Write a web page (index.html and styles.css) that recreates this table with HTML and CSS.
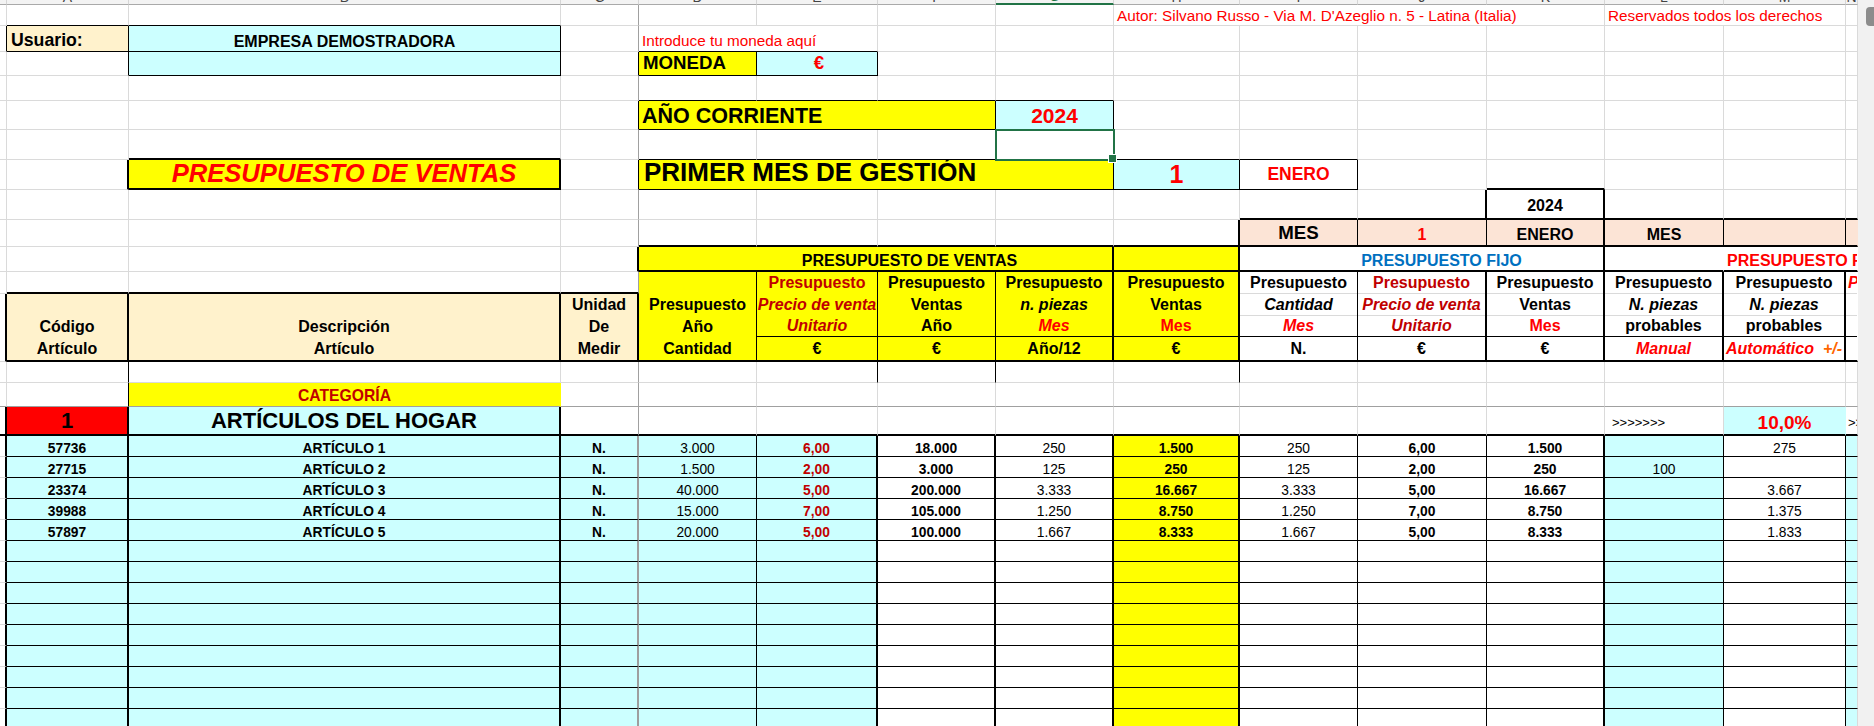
FILE: index.html
```html
<!DOCTYPE html>
<html lang="es">
<head>
<meta charset="utf-8">
<title>Presupuesto de ventas</title>
<link rel="stylesheet" href="styles.css">
</head>
<body>
<div class="app">
  <div class="sheet">
    <div class="row hh">
      <div class="hc"></div><div class="hc"><span>A</span></div><div class="hc"><span>B</span></div><div class="hc"><span>C</span></div><div class="hc"><span>D</span></div><div class="hc"><span>E</span></div><div class="hc"><span>F</span></div><div class="hc on"><span>G</span></div><div class="hc"><span>H</span></div><div class="hc"><span>I</span></div><div class="hc"><span>J</span></div><div class="hc"><span>K</span></div><div class="hc"><span>L</span></div><div class="hc"><span>M</span></div><div class="hc"><span>N</span></div>
    </div>

    <div class="row h21">
      <div class="c"></div><div class="c bb"></div><div class="c bb"></div><div class="c fz"></div>
      <div class="c"></div><div class="c"></div><div class="c"></div><div class="c"></div>
      <div class="c s4 L note">Autor: Silvano Russo - Via M. D'Azeglio n. 5 - Latina (Italia)</div>
      <div class="c s2 L note">Reservados todos los derechos</div>
      <div class="c"></div>
    </div>

    <div class="row h26">
      <div class="c br"></div>
      <div class="c cr br bb L lbl">Usuario:</div>
      <div class="c cy br bb co">EMPRESA DEMOSTRADORA</div>
      <div class="c fz"></div>
      <div class="c s2 bb L note nt">Introduce tu moneda aquí</div>
      <div class="c"></div><div class="c"></div><div class="c"></div><div class="c"></div><div class="c"></div><div class="c"></div><div class="c"></div><div class="c"></div><div class="c"></div>
    </div>

    <div class="row h24">
      <div class="c"></div>
      <div class="c br"></div>
      <div class="c cy br bb"></div>
      <div class="c fz br"></div>
      <div class="c ye br bb L mon">MONEDA</div>
      <div class="c cy br bb red mon">€</div>
      <div class="c"></div><div class="c"></div><div class="c"></div><div class="c"></div><div class="c"></div><div class="c"></div><div class="c"></div><div class="c"></div><div class="c"></div>
    </div>

    <div class="row h25">
      <div class="c"></div><div class="c"></div><div class="c"></div><div class="c fz"></div>
      <div class="c bb"></div><div class="c bb"></div><div class="c bb"></div><div class="c bb"></div>
      <div class="c"></div><div class="c"></div><div class="c"></div><div class="c"></div><div class="c"></div><div class="c"></div><div class="c"></div>
    </div>

    <div class="row h29">
      <div class="c"></div><div class="c"></div><div class="c"></div><div class="c fz br"></div>
      <div class="c s3 ye br bb L ano">AÑO CORRIENTE</div>
      <div class="c cy br bb red yr">2024</div>
      <div class="c"></div><div class="c"></div><div class="c"></div><div class="c"></div><div class="c"></div><div class="c"></div><div class="c"></div>
    </div>

    <div class="row h30">
      <div class="c"></div><div class="c"></div><div class="c BB"></div><div class="c fz"></div>
      <div class="c bb"></div><div class="c bb"></div><div class="c bb"></div><div class="c bb sel"></div>
      <div class="c bb"></div><div class="c bb"></div><div class="c"></div><div class="c"></div><div class="c"></div><div class="c"></div><div class="c"></div>
    </div>

    <div class="row h30">
      <div class="c"></div>
      <div class="c BR"></div>
      <div class="c ye BR BB red title">PRESUPUESTO DE VENTAS</div>
      <div class="c fz br"></div>
      <div class="c s4 ye br bb L big">PRIMER MES DE GESTIÓN</div>
      <div class="c cy br bb red one">1</div>
      <div class="c br bb M red ene">ENERO</div>
      <div class="c"></div>
      <div class="c BB"></div>
      <div class="c"></div><div class="c"></div><div class="c"></div>
    </div>

    <div class="row h30">
      <div class="c"></div><div class="c"></div><div class="c"></div><div class="c fz"></div>
      <div class="c"></div><div class="c"></div><div class="c"></div><div class="c"></div><div class="c"></div>
      <div class="c BB"></div>
      <div class="c BR BB"></div>
      <div class="c BR BB m16 pb3">2024</div>
      <div class="c BB"></div><div class="c BB"></div><div class="c BB"></div>
    </div>

    <div class="row h27">
      <div class="c"></div><div class="c"></div><div class="c"></div><div class="c fz"></div>
      <div class="c BB"></div><div class="c BB"></div><div class="c BB"></div><div class="c BB"></div>
      <div class="c BR BB"></div>
      <div class="c pe br BB mes">MES</div>
      <div class="c pe br BB red m16 pb1">1</div>
      <div class="c pe BR BB m16 pb1">ENERO</div>
      <div class="c pe br BB m16 pb1">MES</div>
      <div class="c pe br BB"></div>
      <div class="c pe BB"></div>
    </div>

    <div class="row h25">
      <div class="c"></div><div class="c"></div><div class="c"></div>
      <div class="c BR"></div>
      <div class="c s4 ye BR BB m16 sh1">PRESUPUESTO DE VENTAS</div>
      <div class="c ye BR BB"></div>
      <div class="c s3 wh BR BB m16 blue sh2">PRESUPUESTO FIJO</div>
      <div class="c wh BB"></div>
      <div class="c s2 wh BB L m16 red">PRESUPUESTO FLEXIBLE</div>
    </div>

    <div class="row h90 hd">
      <div class="c stk nb">
        <div class="c h22"></div>
        <div class="c grow BR"></div>
      </div>
      <div class="c stk nb">
        <div class="c h22 BB"></div>
        <div class="c grow cr BR BB stk">
          <div class="ln h22"></div><div class="ln h21">Código</div><div class="ln grow">Artículo</div>
        </div>
      </div>
      <div class="c stk nb">
        <div class="c h22 BB"></div>
        <div class="c grow cr BR BB stk">
          <div class="ln h22"></div><div class="ln h21">Descripción</div><div class="ln grow">Artículo</div>
        </div>
      </div>
      <div class="c stk nb">
        <div class="c h22 fz BB"></div>
        <div class="c grow cr BR BB stk">
          <div class="ln h22">Unidad</div><div class="ln h21">De</div><div class="ln grow">Medir</div>
        </div>
      </div>
      <div class="c ye br BB stk">
        <div class="ln h22"></div><div class="ln h22">Presupuesto</div><div class="ln h21">Año</div><div class="ln grow">Cantidad</div>
      </div>
      <div class="c ye br BB stk">
        <div class="ln h22 dred">Presupuesto</div><div class="ln h22 dred it">Precio de venta</div><div class="ln h21 dred it lb">Unitario</div><div class="ln grow">€</div>
      </div>
      <div class="c ye br BB stk">
        <div class="ln h22">Presupuesto</div><div class="ln h22">Ventas</div><div class="ln h21 lb">Año</div><div class="ln grow">€</div>
      </div>
      <div class="c ye BR BB stk">
        <div class="ln h22">Presupuesto</div><div class="ln h22 it">n. piezas</div><div class="ln h21 red it lb">Mes</div><div class="ln grow">Año/12</div>
      </div>
      <div class="c ye BR BB stk">
        <div class="ln h22">Presupuesto</div><div class="ln h22">Ventas</div><div class="ln h21 red lb">Mes</div><div class="ln grow">€</div>
      </div>
      <div class="c wh br BB stk">
        <div class="ln h22 lg">Presupuesto</div><div class="ln h22 lg it">Cantidad</div><div class="ln h21 red it lb">Mes</div><div class="ln grow">N.</div>
      </div>
      <div class="c wh BR BB stk">
        <div class="ln h22 lg dred">Presupuesto</div><div class="ln h22 lg dred it">Precio de venta</div><div class="ln h21 dred it lb">Unitario</div><div class="ln grow">€</div>
      </div>
      <div class="c wh BR BB stk">
        <div class="ln h22 lg">Presupuesto</div><div class="ln h22 lg">Ventas</div><div class="ln h21 red lb">Mes</div><div class="ln grow">€</div>
      </div>
      <div class="c wh BR BB stk">
        <div class="ln h22 lg">Presupuesto</div><div class="ln h22 lg it">N. piezas</div><div class="ln h21 lb">probables</div><div class="ln grow red it">Manual</div>
      </div>
      <div class="c wh BR BB stk">
        <div class="ln h22 lg">Presupuesto</div><div class="ln h22 lg it">N. piezas</div><div class="ln h21 lb">probables</div><div class="ln grow red it">Automático&nbsp;&nbsp;<span class="or">+/-</span></div>
      </div>
      <div class="c wh BB stk">
        <div class="ln h22 lg lft red it">Presupuesto</div><div class="ln h22 lg"></div><div class="ln h21 lb"></div><div class="ln grow"></div>
      </div>
    </div>

    <div class="row h21">
      <div class="c"></div><div class="c br"></div><div class="c"></div><div class="c fz"></div>
      <div class="c"></div><div class="c br"></div><div class="c br"></div><div class="c"></div><div class="c br"></div>
      <div class="c"></div><div class="c"></div><div class="c"></div><div class="c"></div><div class="c"></div><div class="c"></div>
    </div>

    <div class="row h24">
      <div class="c fzb"></div><div class="c br fzb"></div>
      <div class="c ye fzb dred cat">CATEGORÍA</div>
      <div class="c fz fzb"></div>
      <div class="c fzb"></div><div class="c fzb"></div><div class="c fzb"></div><div class="c fzb"></div><div class="c fzb"></div><div class="c fzb"></div><div class="c fzb"></div><div class="c fzb"></div><div class="c fzb"></div><div class="c fzb"></div><div class="c fzb"></div>
    </div>

    <div class="row h29">
      <div class="c BR BB"></div>
      <div class="c rd BR BB big22">1</div>
      <div class="c cy BR BB big22">ARTÍCULOS DEL HOGAR</div>
      <div class="c fz BB"></div>
      <div class="c BB"></div><div class="c BB"></div><div class="c BB"></div><div class="c BB"></div><div class="c BB"></div><div class="c BB"></div><div class="c BB"></div><div class="c BB"></div>
      <div class="c BB arr">&gt;&gt;&gt;&gt;&gt;&gt;&gt;</div>
      <div class="c cy BB red pct">10,0%</div>
      <div class="c BB arr arr2">&gt;&gt;&gt;&gt;&gt;&gt;&gt;</div>
    </div>

    <div class="row h21 dr"><div class="c"></div><div class="c">57736</div><div class="c">ARTÍCULO 1</div><div class="c">N.</div><div class="c">3.000</div><div class="c">6,00</div><div class="c">18.000</div><div class="c">250</div><div class="c">1.500</div><div class="c">250</div><div class="c">6,00</div><div class="c">1.500</div><div class="c"></div><div class="c">275</div><div class="c"></div></div>
    <div class="row h21 dr"><div class="c"></div><div class="c">27715</div><div class="c">ARTÍCULO 2</div><div class="c">N.</div><div class="c">1.500</div><div class="c">2,00</div><div class="c">3.000</div><div class="c">125</div><div class="c">250</div><div class="c">125</div><div class="c">2,00</div><div class="c">250</div><div class="c">100</div><div class="c"></div><div class="c"></div></div>
    <div class="row h21 dr"><div class="c"></div><div class="c">23374</div><div class="c">ARTÍCULO 3</div><div class="c">N.</div><div class="c">40.000</div><div class="c">5,00</div><div class="c">200.000</div><div class="c">3.333</div><div class="c">16.667</div><div class="c">3.333</div><div class="c">5,00</div><div class="c">16.667</div><div class="c"></div><div class="c">3.667</div><div class="c"></div></div>
    <div class="row h21 dr"><div class="c"></div><div class="c">39988</div><div class="c">ARTÍCULO 4</div><div class="c">N.</div><div class="c">15.000</div><div class="c">7,00</div><div class="c">105.000</div><div class="c">1.250</div><div class="c">8.750</div><div class="c">1.250</div><div class="c">7,00</div><div class="c">8.750</div><div class="c"></div><div class="c">1.375</div><div class="c"></div></div>
    <div class="row h21 dr"><div class="c"></div><div class="c">57897</div><div class="c">ARTÍCULO 5</div><div class="c">N.</div><div class="c">20.000</div><div class="c">5,00</div><div class="c">100.000</div><div class="c">1.667</div><div class="c">8.333</div><div class="c">1.667</div><div class="c">5,00</div><div class="c">8.333</div><div class="c"></div><div class="c">1.833</div><div class="c"></div></div>
    <div class="row h21 dr"><div class="c"></div><div class="c"></div><div class="c"></div><div class="c"></div><div class="c"></div><div class="c"></div><div class="c"></div><div class="c"></div><div class="c"></div><div class="c"></div><div class="c"></div><div class="c"></div><div class="c"></div><div class="c"></div><div class="c"></div></div>
    <div class="row h21 dr"><div class="c"></div><div class="c"></div><div class="c"></div><div class="c"></div><div class="c"></div><div class="c"></div><div class="c"></div><div class="c"></div><div class="c"></div><div class="c"></div><div class="c"></div><div class="c"></div><div class="c"></div><div class="c"></div><div class="c"></div></div>
    <div class="row h21 dr"><div class="c"></div><div class="c"></div><div class="c"></div><div class="c"></div><div class="c"></div><div class="c"></div><div class="c"></div><div class="c"></div><div class="c"></div><div class="c"></div><div class="c"></div><div class="c"></div><div class="c"></div><div class="c"></div><div class="c"></div></div>
    <div class="row h21 dr"><div class="c"></div><div class="c"></div><div class="c"></div><div class="c"></div><div class="c"></div><div class="c"></div><div class="c"></div><div class="c"></div><div class="c"></div><div class="c"></div><div class="c"></div><div class="c"></div><div class="c"></div><div class="c"></div><div class="c"></div></div>
    <div class="row h21 dr"><div class="c"></div><div class="c"></div><div class="c"></div><div class="c"></div><div class="c"></div><div class="c"></div><div class="c"></div><div class="c"></div><div class="c"></div><div class="c"></div><div class="c"></div><div class="c"></div><div class="c"></div><div class="c"></div><div class="c"></div></div>
    <div class="row h21 dr"><div class="c"></div><div class="c"></div><div class="c"></div><div class="c"></div><div class="c"></div><div class="c"></div><div class="c"></div><div class="c"></div><div class="c"></div><div class="c"></div><div class="c"></div><div class="c"></div><div class="c"></div><div class="c"></div><div class="c"></div></div>
    <div class="row h21 dr"><div class="c"></div><div class="c"></div><div class="c"></div><div class="c"></div><div class="c"></div><div class="c"></div><div class="c"></div><div class="c"></div><div class="c"></div><div class="c"></div><div class="c"></div><div class="c"></div><div class="c"></div><div class="c"></div><div class="c"></div></div>
    <div class="row h21 dr"><div class="c"></div><div class="c"></div><div class="c"></div><div class="c"></div><div class="c"></div><div class="c"></div><div class="c"></div><div class="c"></div><div class="c"></div><div class="c"></div><div class="c"></div><div class="c"></div><div class="c"></div><div class="c"></div><div class="c"></div></div>
    <div class="row h21 dr"><div class="c"></div><div class="c"></div><div class="c"></div><div class="c"></div><div class="c"></div><div class="c"></div><div class="c"></div><div class="c"></div><div class="c"></div><div class="c"></div><div class="c"></div><div class="c"></div><div class="c"></div><div class="c"></div><div class="c"></div></div>
  </div>
  <div class="vscroll"><div class="thumb"></div></div>
</div>
</body>
</html>
```

FILE: styles.css
```css
* { box-sizing: border-box; margin: 0; padding: 0; }
html, body { width: 1874px; height: 726px; overflow: hidden; background: #fff; }
body { font-family: "Liberation Sans", Arial, Helvetica, sans-serif; color: #000; }

.app { display: flex; width: 1874px; height: 726px; }
.sheet { flex: none; width: 1858px; height: 726px; overflow: hidden; display: flex; flex-direction: column; }
.vscroll { flex: none; width: 16px; height: 726px; background: #f1f1f1; display: flex; justify-content: flex-end; }
.thumb { width: 8px; height: 19px; margin-top: 7px; border-radius: 4px 0 0 4px; background: #8c8c8c; }

.row {
  flex: none;
  display: grid;
  grid-template-columns: 7px 122px 432px 78px 118px 121px 118px 118px 126px 118px 129px 118px 119px 122px 12px;
}
.hh { height: 5px; }
.h21 { height: 21px; }
.h22 { height: 22px; }
.h24 { height: 24px; }
.h25 { height: 25px; }
.h26 { height: 26px; }
.h27 { height: 27px; }
.h29 { height: 29px; }
.h30 { height: 30px; }
.h90 { height: 90px; }

/* column header strip (scrolled almost out of view) */
.hc {
  display: flex; align-items: flex-end; justify-content: center; overflow: hidden;
  background: #f3f3f3; border-right: 1px solid #d6d6d6; border-bottom: 1px solid #a9a9a9;
  font-size: 14px; line-height: 16px; color: #444;
}
.hc span { margin-bottom: -1px; }
.hc.on { border-bottom: 2px solid #217346; color: #217346; }

/* cells */
.c {
  display: flex; align-items: flex-end; justify-content: center;
  min-width: 0; overflow: hidden; white-space: nowrap;
  border-right: 1px solid #dadada; border-bottom: 1px solid #dadada;
}
.s2 { grid-column: span 2; }
.s3 { grid-column: span 3; }
.s4 { grid-column: span 4; }

.stk { flex-direction: column; align-items: stretch; justify-content: flex-start; }
.nb { border: 0; }
.grow { flex: 1 1 auto; }
.ln { flex: none; display: flex; align-items: center; justify-content: center; white-space: nowrap; }
.ln.grow { flex: 1 1 auto; }
.lg { border-bottom: 1px solid #dadada; }
.lb { border-bottom: 1px solid #000; }
.lft { justify-content: flex-start; padding-left: 2px; }

/* fills */
.cy { background: #ccffff; border-color: transparent; }
.ye { background: #ffff00; border-color: transparent; }
.cr { background: #fff2cc; border-color: transparent; }
.pe { background: #fce4d6; border-color: transparent; }
.rd { background: #ff0000; border-color: transparent; }
.wh { background: #ffffff; border-color: transparent; }

/* freeze panes lines */
.fz { border-right-color: #a0a0a0; }
.fzb { border-bottom-color: #a0a0a0; }

/* borders */
.br { border-right: 1px solid #000; }
.bb { border-bottom: 1px solid #000; }
.BR { border-right: 2px solid #000; }
.BB { border-bottom: 2px solid #000; }

/* selected cell */
.sel { position: relative; overflow: visible; z-index: 1; outline: 2px solid #217346; outline-offset: -1px; }
.sel::after {
  content: ""; position: absolute; right: -4px; bottom: -4px;
  width: 7px; height: 7px; background: #217346; border: 1px solid #fff;
}

/* text */
.L { justify-content: flex-start; padding-left: 3px; }
.M { align-items: center; }
.red { color: #ff0000; }
.dred { color: #c00000; }
.blue { color: #0070c0; }
.or { color: #ff6600; }
.it { font-style: italic; }

.note { font-size: 15.3px; color: #ff0000; }
.nt { padding-bottom: 1px; }
.lbl { font-size: 17.7px; font-weight: bold; padding-left: 4px; }
.co { font-size: 16px; font-weight: bold; }
.mon { font-size: 18.7px; font-weight: bold; padding-left: 4px; padding-bottom: 1px; }
.ano { font-size: 21.5px; font-weight: bold; }
.yr { font-size: 21px; font-weight: bold; padding-bottom: 1px; }
.title { font-size: 25.6px; font-weight: bold; font-style: italic; }
.big { font-size: 26px; font-weight: bold; padding-left: 5px; padding-bottom: 1px; }
.one { font-size: 25px; font-weight: bold; }
.ene { font-size: 17.5px; font-weight: bold; }
.m16 { font-size: 16px; font-weight: bold; }
.mes { font-size: 18.7px; font-weight: bold; padding-bottom: 1px; }
.pb1 { padding-bottom: 1px; }
.pb3 { padding-bottom: 3px; }
.sh1 { padding-left: 68px; }
.sh2 { padding-left: 40px; }
.hd { font-size: 16px; font-weight: bold; }
.cat { font-size: 15.7px; font-weight: bold; padding-bottom: 1px; }
.big22 { font-size: 22px; font-weight: bold; }
.pct { font-size: 19px; font-weight: bold; }
.arr { font-size: 13px; align-items: center; justify-content: flex-start; padding-left: 7px; padding-top: 3px; }
.arr2 { padding-left: 2px; }

/* data rows */
.dr .c { border-bottom-color: #000; font-size: 13.8px; }
.dr .c:nth-child(1) { border-right: 2px solid #000; border-bottom-color: #dadada; }
.dr .c:nth-child(2),
.dr .c:nth-child(3) { background: #ccffff; border-right: 2px solid #000; font-weight: bold; }
.dr .c:nth-child(4) { background: #ccffff; border-right: 2px solid #9e9e9e; font-weight: bold; }
.dr .c:nth-child(5) { background: #ccffff; border-right: 1px solid #000; }
.dr .c:nth-child(6) { background: #ccffff; border-right: 2px solid #000; font-weight: bold; color: #c00000; }
.dr .c:nth-child(7) { border-right: 2px solid #000; font-weight: bold; }
.dr .c:nth-child(8) { border-right: 2px solid #000; }
.dr .c:nth-child(9) { background: #ffff00; border-right: 2px solid #000; font-weight: bold; }
.dr .c:nth-child(10) { border-right: 1px solid #000; }
.dr .c:nth-child(11) { border-right: 1px solid #000; font-weight: bold; }
.dr .c:nth-child(12) { border-right: 2px solid #000; font-weight: bold; }
.dr .c:nth-child(13) { background: #ccffff; border-right: 1px solid #000; }
.dr .c:nth-child(14) { border-right: 1px solid #000; }
.dr .c:nth-child(15) { background: #ccffff; }
```
